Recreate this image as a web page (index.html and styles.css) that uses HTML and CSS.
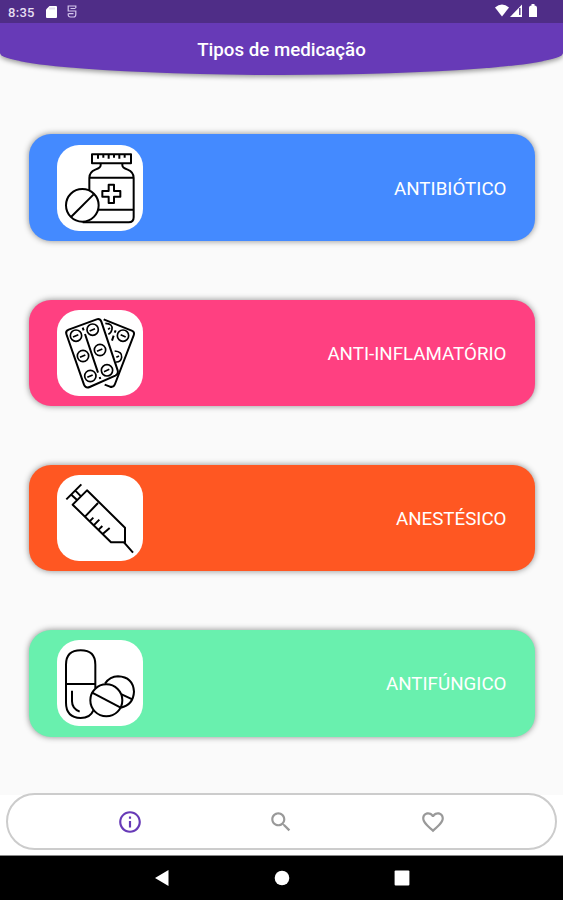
FILE: index.html
```html
<!DOCTYPE html>
<html lang="pt-BR">
	<head>
		<meta charset="UTF-8" />
		<meta name="viewport" content="width=device-width, initial-scale=1.0" />
		<title>Tipos de medicação</title>
		<link rel="stylesheet" href="styles.css">
	</head>
	<body>
		<header class="header">
			<div class="status-bar">
				<span class="clock">8:35</span>
				<svg class="sd-icon" width="11" height="12" viewBox="0 0 11 12">
					<path d="M3.5 0H10Q11 0 11 1V11Q11 12 10 12H1Q0 12 0 11V3.5Z" fill="#fff" />
					<path d="M4 1.5V3.5M6 1.5V3.5M8 1.5V3.5" stroke="#b9a8d4" stroke-width=".8" />
				</svg>
				<svg class="debug-icon" width="10" height="13" viewBox="0 0 10 13">
					<path d="M8.8 3V1H1.200V6H8.800V9.500Q8.800 12 6.500 12H3.500Q1.200 12 1.200 9.500V8.500M3.500 3.500H8.500M1.500 8.700H6.500" fill="none" stroke="#d5c7ee" stroke-width="1.200" />
				</svg>
				<svg class="signal-icons" width="43" height="14" viewBox="0 0 43 14" fill="#fff">
					<path d="M0 3.500Q7 -2.500 14 3.500L7 12.500Z" />
					<path d="M27 0.500V13H15Z" />
					<path d="M24.800 4V11" stroke="#4f2d87" stroke-width="1.400" />
					<path d="M36.500 0H39.500V1.500Q42 1.500 42 4V13H34V4Q34 1.500 36.500 1.500Z" />
				</svg>
			</div>
			<h1 class="title">Tipos de medicação</h1>
		</header>

		<main class="list">
			<div class="card blue">
				<div class="tile">
					<svg viewBox="110 58 258 258">
						<path d="M215 86H332V113H215ZM233 88V99M249 88V96M265 88V99M281 88V96M297 88V99M313 88V96" />
						<path d="M241 114V119Q241 127 225 132Q207 139 207 157V193M306 114V119Q306 127 322 132Q340 139 340 157V275Q340 290 325 290H187M207 156H340M232 252H340" />
						<path d="M265 177H281V196H300V213H281V232H265V213H246V196H265Z" />
						<circle cx="186" cy="239" r="49" />
						<path d="M152 274L220 206" />
					</svg>
				</div>
				<span class="label">ANTIBIÓTICO</span>
			</div>

			<div class="card pink">
				<div class="tile">
					<svg viewBox="110 58 258 258">
						<path d="M145 117L229 86Q239 83 243 93L292 239Q295 250 285 255L208 289Q196 294 191 282L138 130Q135 121 145 117Z" />
						<path d="M187 111L190 119M194 130L233 246M238 259L240 265" />
						<path d="M250 86L334 120Q344 124 340 134L284 280Q280 291 269 288L253 282M286 119L283 126M280 135L275 150" />
						<g class="thin">
							<circle cx="167" cy="135" r="17" />
							<circle cx="217" cy="117" r="17" />
							<circle cx="188" cy="196" r="17" />
							<circle cx="239" cy="178" r="17" />
							<circle cx="210" cy="256" r="17" />
							<circle cx="260" cy="239" r="17" />
							<circle cx="308" cy="135" r="17" />
							<path d="M255 98Q278 99 275 116Q272 128 264 131M263 116L269 112M283 181Q306 183 304 200Q301 215 287 214M288 200L296 196" />
							<path d="M158 139L174 132M208 121L224 114M179 200L195 193M230 182L246 175M201 260L217 253M251 243L267 236M301 132L316 139" />
						</g>
					</svg>
				</div>
				<span class="label">ANTI-INFLAMATÓRIO</span>
			</div>

			<div class="card orange">
				<div class="tile">
					<svg viewBox="110 58 258 258">
						<path d="M138 131L183 86M153 117L171 134M165 105L182 122" />
						<path d="M157 147L200 104L314 216V260H272ZM194 183L233 142" />
						<path d="M208 197L219 186M220 209L237 192M235 222L246 211M247 235L268 217M311 260L338 291" />
					</svg>
				</div>
				<span class="label">ANESTÉSICO</span>
			</div>

			<div class="card green">
				<div class="tile">
					<svg viewBox="110 58 258 258">
						<path d="M219 269Q210 292 181 292Q137 290 137 246V132Q137 89 181 89Q225 89 225 132V202M138 190H224M155 210V242Q155 264 178 273" />
						<circle cx="258" cy="239" r="48" />
						<path d="M214 215L301 261" />
						<path d="M254 189Q269 167 293 167Q338 169 341 213Q339 253 301 261M304 221L336 236" />
					</svg>
				</div>
				<span class="label">ANTIFÚNGICO</span>
			</div>
		</main>

		<footer class="footer">
			<nav class="tabs">
				<svg class="active" viewBox="0 0 24 24"><path d="M11 7h2v2h-2zm0 4h2v6h-2zm1-9C6.480 2 2 6.480 2 12s4.480 10 10 10 10-4.480 10-10S17.520 2 12 2zm0 18c-4.410 0-8-3.590-8-8s3.590-8 8-8 8 3.590 8 8-3.590 8-8 8z" /></svg>
				<svg viewBox="0 0 24 24"><path d="M15.500 14h-.790l-.280-.270C15.410 12.590 16 11.110 16 9.500 16 5.910 13.090 3 9.500 3S3 5.910 3 9.500 5.910 16 9.500 16c1.610 0 3.090-.590 4.230-1.570l.270.280v.790l5 4.990L20.490 19l-4.990-5zm-6 0C7.010 14 5 11.990 5 9.500S7.010 5 9.500 5 14 7.010 14 9.500 11.990 14 9.500 14z" /></svg>
				<svg viewBox="0 0 24 24"><path d="M16.500 3c-1.740 0-3.410.810-4.500 2.090C10.910 3.810 9.240 3 7.500 3 4.420 3 2 5.420 2 8.500c0 3.780 3.400 6.860 8.550 11.540L12 21.350l1.450-1.320C18.600 15.360 22 12.280 22 8.500 22 5.420 19.580 3 16.500 3zm-4.400 15.550l-.100.100-.100-.100C7.140 14.240 4 11.390 4 8.500 4 6.500 5.500 5 7.500 5c1.540 0 3.040.990 3.570 2.360h1.870C13.460 5.990 14.960 5 16.500 5c2 0 3.500 1.500 3.500 3.500 0 2.890-3.140 5.740-7.900 10.050z" /></svg>
			</nav>
		</footer>

		<div class="system-nav">
			<svg width="16" height="16" viewBox="0 0 16 16"><path d="M1 8L14.500 0V16Z" /></svg>
			<svg width="16" height="16" viewBox="0 0 16 16"><circle cx="8" cy="8" r="7.300" /></svg>
			<svg width="16" height="16" viewBox="0 0 16 16"><rect x=".6" y=".6" width="14.800" height="15" rx="1" /></svg>
		</div>
	</body>
</html>
```
FILE: styles.css
```css
* {
	box-sizing: border-box;
}
body {
	margin: 0;
	height: 900px;
	display: flex;
	flex-direction: column;
	overflow: hidden;
	background-color: #fafafa;
	font-family: Roboto, sans-serif;
}
.header {
	height: 75px;
	overflow: hidden;
	background-color: #673ab7;
	border-radius: 0 0 50% 50% / 0 0 22px 22px;
	box-shadow: 0 2px 5px rgba(0, 0, 0, 0.4);
	color: #fff;
}
.status-bar {
	height: 23px;
	padding: 0 25px 0 8px;
	display: flex;
	align-items: center;
	background-color: #4f2d87;
}
.clock {
	width: 38px;
	padding-top: 1px;
	font-size: 13px;
	font-weight: 500;
	letter-spacing: 0.3px;
	color: #e6dff2;
}
.sd-icon {
	margin-right: 10px;
}
.signal-icons {
	margin-left: auto;
	margin-bottom: 1px;
}
.title {
	margin: 0;
	padding-top: 1px;
	line-height: 52px;
	text-align: center;
	font-size: 18.7px;
	font-weight: 500;
}
.list {
	height: 720px;
	padding: 59.3px 28px 0 29px;
	display: flex;
	flex-direction: column;
	gap: 58.8px;
}
.card {
	height: 106.5px;
	padding: 0 28.5px 0 28px;
	display: flex;
	flex-shrink: 0;
	align-items: center;
	justify-content: space-between;
	border-radius: 22px;
	box-shadow: 0 0 6px rgba(0, 0, 0, 0.45);
	color: #fff;
}
.blue {
	background-color: #448aff;
}
.pink {
	background-color: #ff4081;
}
.orange {
	background-color: #ff5722;
}
.green {
	background-color: #69f0ae;
}
.tile {
	width: 86px;
	height: 86px;
	border-radius: 22px;
	background-color: #fff;
}
.tile svg {
	display: block;
	width: 100%;
	height: 100%;
	fill: none;
	stroke: #000;
	stroke-width: 6;
	stroke-linejoin: round;
}
.tile .thin {
	stroke-width: 5;
}
.label {
	padding-top: 2px;
	font-size: 18.75px;
}
.footer {
	height: 61px;
	background-color: #fff;
	border-bottom: 1px solid #888;
}
.tabs {
	height: 57px;
	margin: -2px 6px 0;
	padding: 0 46px;
	display: flex;
	align-items: center;
	justify-content: space-around;
	border: 2px solid #ccc;
	border-radius: 29px;
	background-color: #fff;
}
.tabs svg {
	width: 26px;
	height: 26px;
	fill: #999;
}
.tabs .active {
	fill: #673ab7;
}
.system-nav {
	height: 44px;
	display: flex;
	align-items: center;
	justify-content: center;
	gap: 104px;
	background-color: #000;
	fill: #fff;
}
```
